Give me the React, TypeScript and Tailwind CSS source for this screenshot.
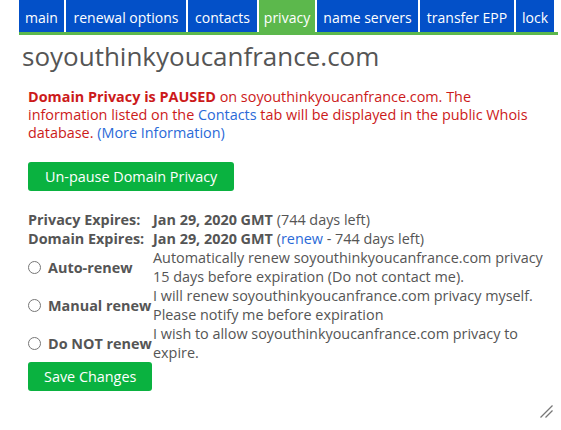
import { useState } from "react";

const tabs = [
  { name: "main", w: "w-[45px]" },
  { name: "renewal options", w: "w-[120px]" },
  { name: "contacts", w: "w-[69px]" },
  { name: "privacy", w: "w-[56px]" },
  { name: "name servers", w: "w-[101px]" },
  { name: "transfer EPP", w: "w-[94px]" },
  { name: "lock", w: "w-[38px]" },
];

const options = [
  {
    id: "auto",
    label: "Auto-renew",
    text: "Automatically renew soyouthinkyoucanfrance.com privacy 15 days before expiration (Do not contact me).",
  },
  {
    id: "manual",
    label: "Manual renew",
    text: "I will renew soyouthinkyoucanfrance.com privacy myself. Please notify me before expiration",
  },
  {
    id: "none",
    label: "Do NOT renew",
    text: "I wish to allow soyouthinkyoucanfrance.com privacy to expire.",
  },
];

export default function App() {
  const [renew, setRenew] = useState("");

  return (
    <div
      className="relative h-[430px] w-[561px] bg-white text-[14.4px] leading-[19px] text-[#555]"
      style={{ fontFamily: '"Open Sans", "Noto Sans", sans-serif' }}
    >
      <div className="ml-[19px] w-[539px]">
        <div className="flex gap-[2px] border-b-[3px] border-[#5cb84c]">
          {tabs.map((tab) => (
            <div
              key={tab.name}
              className={
                "flex h-8 shrink-0 items-center justify-center whitespace-nowrap pt-[2px] text-[14px] text-white " +
                tab.w +
                " " +
                (tab.name === "privacy" ? "bg-[#5cb84c]" : "bg-[#0350c8]")
              }
            >
              {tab.name}
            </div>
          ))}
        </div>

        <h1 className="mt-[6px] ml-[3px] text-[26px] leading-[31px] text-[#555]">soyouthinkyoucanfrance.com</h1>

        <div className="pl-[9px]">
          <p className="mt-[16px] w-[514px] leading-[18px] text-[#cc1a1a]">
            <b>Domain Privacy is PAUSED</b> on soyouthinkyoucanfrance.com. The information listed on the{" "}
            <a className="text-[#2a6ad8]">Contacts</a> tab will be displayed in the public Whois database.{" "}
            <a className="text-[#2a6ad8]">(More Information)</a>
          </p>

          <button className="mt-[20px] rounded-[3px] bg-[#0ab240] px-[17px] py-[5px] text-[14.4px] leading-[19px] text-white">
            Un-pause Domain Privacy
          </button>

          <table className="mt-[19px] w-[529px] border-collapse">
            <tbody>
              <tr>
                <td className="w-[125px] p-0 font-bold">Privacy Expires:</td>
                <td className="p-0">
                  <b>Jan 29, 2020 GMT</b> (744 days left)
                </td>
              </tr>
              <tr>
                <td className="p-0 font-bold">Domain Expires:</td>
                <td className="p-0">
                  <b>Jan 29, 2020 GMT</b> (<a className="text-[#2a6ad8]">renew</a> - 744 days left)
                </td>
              </tr>
              {options.map((o) => (
                <tr key={o.id}>
                  <td className="p-0 align-middle">
                    <label className="flex items-center gap-[7px] whitespace-nowrap font-bold">
                      <input
                        type="radio"
                        name="renew"
                        checked={renew === o.id}
                        onChange={() => setRenew(o.id)}
                        className="m-0 h-[13px] w-[13px]"
                      />
                      {o.label}
                    </label>
                  </td>
                  <td className="p-0">{o.text}</td>
                </tr>
              ))}
            </tbody>
          </table>

          <button className="rounded-[3px] bg-[#0ab240] px-[16px] py-[5px] text-[14.4px] leading-[19px] text-white">
            Save Changes
          </button>
        </div>
      </div>

      <svg className="absolute left-[539px] top-[404px]" width="15" height="15" viewBox="0 0 15 15">
        <line x1="1.5" y1="13.5" x2="13.5" y2="1.5" stroke="#777" strokeWidth="1.2" />
        <line x1="6.5" y1="13.5" x2="13.5" y2="6.5" stroke="#777" strokeWidth="1.2" />
      </svg>
    </div>
  );
}
